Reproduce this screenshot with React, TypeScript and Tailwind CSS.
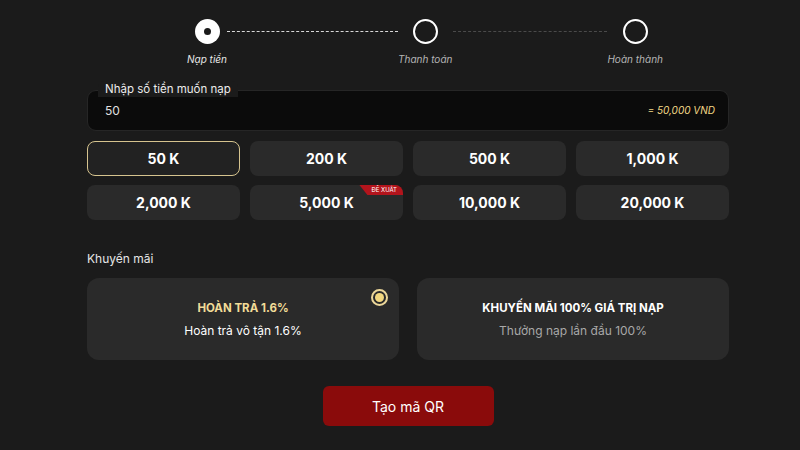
import { useState } from "react";

const amounts = ["50 K", "200 K", "500 K", "1,000 K", "2,000 K", "5,000 K", "10,000 K", "20,000 K"];

const steps = [
    { label: "Nạp tiền", done: true },
    { label: "Thanh toán", done: false },
    { label: "Hoàn thành", done: false },
];

function Stepper() {
    return (
        <div className="flex ml-[100px] w-[476px] pt-[19px]">
            {steps.map((s, i) => (
                <div key={s.label} className="contents">
                    <div className="flex flex-col items-center">
                        {s.done ? (
                            <div className="w-[25px] h-[25px] rounded-full bg-white flex items-center justify-center">
                                <div className="w-[7px] h-[7px] rounded-full bg-[#1b1b1b]"></div>
                            </div>
                        ) : (
                            <div className="w-[25px] h-[25px] rounded-full border-2 border-white"></div>
                        )}
                        <span className={"mt-[8px] text-[10px] leading-[14px] italic " + (s.done ? "text-[#e8e8e8]" : "text-[#b5b5b5]")}>
                            {s.label}
                        </span>
                    </div>
                    {i === 0 && <div className="w-[171px] mt-[12px] h-0 border-t border-dashed border-[#d8d8d8]"></div>}
                    {i === 1 && <div className="flex-1 mt-[12px] h-0 border-t border-dashed border-[#4a4a4a]"></div>}
                </div>
            ))}
        </div>
    );
}

export default function App() {
    const [selected, setSelected] = useState(0);

    return (
        <div className="w-[800px] h-[450px] bg-[#1b1b1b] text-white overflow-hidden" style={{ fontFamily: "Inter, 'Noto Sans', sans-serif" }}>
            <div className="ml-[87px] w-[642px]">
                <Stepper />

                {/* amount input */}
                <div className="relative mt-[24px]">
                    <div className="absolute left-[11px] -top-[9px] px-[7px] rounded-t-md bg-[#1b1b1b] text-[11.5px] leading-[16px] text-[#ececec]">
                        Nhập số tiền muốn nạp
                    </div>
                    <div className="h-[41px] rounded-[9px] bg-[#0b0b0b] border border-[#262626] flex items-center justify-between pl-[17px] pr-[13px]">
                        <span className="text-[12px] text-[#e0e0e0]">50</span>
                        <span className="text-[10px] italic text-[#f3d987]">= 50,000 VND</span>
                    </div>
                </div>

                {/* amount buttons */}
                <div className="grid grid-cols-4 gap-x-[10px] gap-y-[9px] mt-[10px]">
                    {amounts.map((a, i) => (
                        <button
                            key={a}
                            onClick={() => setSelected(i)}
                            className={"relative h-[35px] rounded-[8px] overflow-hidden text-[14px] font-bold flex items-center justify-center " +
                                (selected === i ? "bg-[#222] border border-[#d6c48f]" : "bg-[#2a2a2a]")}
                        >
                            {a}
                            {a === "5,000 K" && (
                                <span className="absolute top-0 right-0 h-[10px] pl-[12px] pr-[6px] bg-[#b3141c] text-[6px] leading-[10px] font-normal text-white [clip-path:polygon(0_0,100%_0,100%_100%,8px_100%)]">
                                    ĐỀ XUẤT
                                </span>
                            )}
                        </button>
                    ))}
                </div>

                {/* promotions */}
                <div className="mt-[31px] text-[12px] leading-[16px] text-[#e6e6e6]">Khuyến mãi</div>
                <div className="grid grid-cols-2 gap-[18px] mt-[11px]">
                    <div className="relative h-[82px] rounded-[12px] bg-[#2a2a2a] flex flex-col items-center justify-center gap-[7px]">
                        <div className="absolute right-[11px] top-[11px] w-[17px] h-[17px] rounded-full border-2 border-[#ecd79a] flex items-center justify-center">
                            <div className="w-[9px] h-[9px] rounded-full bg-[#f2d77f]"></div>
                        </div>
                        <span className="text-[11.5px] leading-[16px] font-bold text-[#f1dc98]">HOÀN TRẢ 1.6%</span>
                        <span className="text-[12px] leading-[16px] text-white">Hoàn trả vô tận 1.6%</span>
                    </div>
                    <div className="h-[82px] rounded-[12px] bg-[#2a2a2a] flex flex-col items-center justify-center gap-[7px]">
                        <span className="text-[11.5px] leading-[16px] font-bold text-white">KHUYẾN MÃI 100% GIÁ TRỊ NẠP</span>
                        <span className="text-[12px] leading-[16px] text-[#a8a8a8]">Thưởng nạp lần đầu 100%</span>
                    </div>
                </div>

                <div className="flex justify-center mt-[26px]">
                    <button className="w-[171px] h-[40px] rounded-[6px] bg-[#8a0b0b] text-[14px] text-white">Tạo mã QR</button>
                </div>
            </div>
        </div>
    );
}
